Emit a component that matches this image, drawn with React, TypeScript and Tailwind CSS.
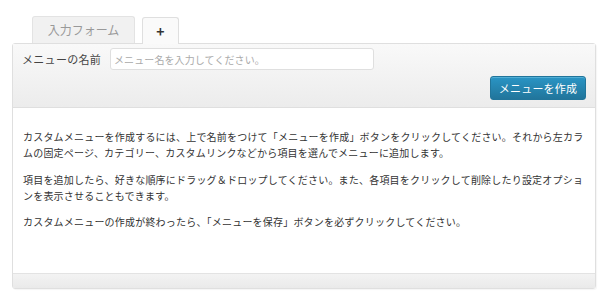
const font = {
  fontFamily: '"Noto Sans CJK JP", "Liberation Sans", sans-serif',
};

export default function App() {
  return (
    <div className="w-[609px] h-[308px] bg-white pt-4 pl-3 pr-[13px]" style={font}>
      {/* tabs */}
      <div className="flex items-end gap-[7px] pl-5">
        <div className="h-[27px] w-[103px] flex items-center justify-center rounded-t-[3px] border border-b-0 border-[#e3e3e3] bg-[#f1f1f1] text-[12px] text-[#999]">
          入力フォーム
        </div>
        <div className="relative z-10 -mb-px h-[27px] w-[37px] flex items-center justify-center rounded-t-[3px] border border-b-0 border-[#dfdfdf] bg-[#fafafa] text-[14px] font-bold text-[#333]">
          +
        </div>
      </div>

      {/* panel */}
      <div className="border border-[#dfdfdf] rounded-[3px] shadow-[1px_1px_1px_rgba(0,0,0,0.04)]">
        <div className="h-[64px] border-b border-[#dfdfdf] bg-gradient-to-b from-[#f9f9f9] to-[#ececec] pl-[9px] pr-[9px] pt-1">
          <div className="flex items-center">
            <span className="w-[88px] text-[11px] tracking-[0.3px] text-[#444]">メニューの名前</span>
            <div className="h-[22px] w-[264px] rounded-[3px] border border-[#dfdfdf] bg-white pl-[3px] flex items-center text-[10px] text-[#aaa] tracking-[0.1px]">
              メニュー名を入力してください。
            </div>
          </div>
          <div className="flex justify-end mt-[6px]">
            <button className="h-[24px] w-[96px] rounded-[3px] border border-[#21759b] bg-gradient-to-b from-[#2a95c5] to-[#21759b] text-[11px] text-white tracking-[0.2px] shadow-[inset_0_1px_0_rgba(120,200,230,0.5)]">
              メニューを作成
            </button>
          </div>
        </div>

        <div className="h-[165px] bg-white px-[10px] pt-[21px] text-[10px] leading-[16px] tracking-[0.2px] text-[#333]">
          <p className="mb-[11px]">
            カスタムメニューを作成するには、上で名前をつけて「メニューを作成」ボタンをクリックしてください。それから左カラムの固定ページ、カテゴリー、カスタムリンクなどから項目を選んでメニューに追加します。
          </p>
          <p className="mb-[10px]">
            項目を追加したら、好きな順序にドラッグ＆ドロップしてください。また、各項目をクリックして削除したり設定オプションを表示させることもできます。
          </p>
          <p>
            カスタムメニューの作成が終わったら、「メニューを保存」ボタンを必ずクリックしてください。
          </p>
        </div>

        <div className="h-[15px] border-t border-[#e3e3e3] bg-gradient-to-b from-[#f3f3f3] to-[#eaeaea]" />
      </div>
    </div>
  );
}
